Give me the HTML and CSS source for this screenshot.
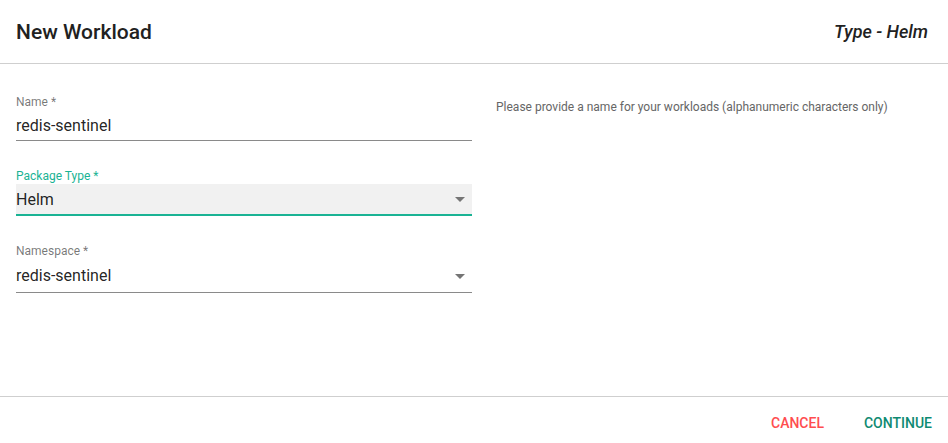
FILE: index.html
```html
<!DOCTYPE html>
<html lang="en">
<head>
    <meta charset="UTF-8">
    <meta name="viewport" content="width=device-width, initial-scale=1.0">
    <title>New Workload</title>
    <link rel="stylesheet" href="styles.css">
</head>
<body>
    <div class="dialog">
        <div class="dialog-header">
            <h2>New Workload</h2>
            <span class="type-tag">Type - Helm</span>
        </div>

        <div class="dialog-body">
            <div class="form-col">
                <div class="field">
                    <label for="name">Name *</label>
                    <div class="input-box">
                        <input type="text" id="name" value="redis-sentinel">
                    </div>
                </div>
                <div class="field focused">
                    <label>Package Type *</label>
                    <div class="input-box select filled">
                        <span class="value">Helm</span>
                        <svg class="arrow" viewBox="0 0 24 24" width="24" height="24"><path d="M7 10l5 5 5-5z"/></svg>
                    </div>
                </div>
                <div class="field">
                    <label>Namespace *</label>
                    <div class="input-box select">
                        <span class="value">redis-sentinel</span>
                        <svg class="arrow" viewBox="0 0 24 24" width="24" height="24"><path d="M7 10l5 5 5-5z"/></svg>
                    </div>
                </div>
            </div>
            <div class="help-col">
                <p>Please provide a name for your workloads (alphanumeric characters only)</p>
            </div>
        </div>

        <div class="dialog-footer">
            <button class="btn cancel">Cancel</button>
            <button class="btn continue">Continue</button>
        </div>
    </div>
</body>
</html>
```

FILE: styles.css
```css
html, body {
    overflow: hidden;
}
body {
    font-family: Roboto, "Liberation Sans", sans-serif;
    margin: 0;
    background-color: #fff;
    color: rgba(0, 0, 0, 0.87);
}
.dialog {
    width: 100%;
}
.dialog-header {
    display: flex;
    justify-content: space-between;
    align-items: center;
    height: 63px;
    padding: 0 20px 0 16px;
    border-bottom: 1px solid #cfcfcf;
}
.dialog-header h2 {
    margin: 0;
    font-size: 21px;
    font-weight: 500;
    color: #212121;
}
.type-tag {
    font-size: 18px;
    font-weight: 500;
    font-style: italic;
    color: #212121;
}
.dialog-body {
    display: flex;
    gap: 24px;
    height: 332px;
    box-sizing: border-box;
    padding: 30px 16px 0 16px;
}
.form-col {
    width: 456px;
    display: flex;
    flex-direction: column;
    gap: 27px;
}
.field label {
    display: block;
    font-size: 12px;
    line-height: 16px;
    color: rgba(0, 0, 0, 0.54);
}
.field.focused label {
    color: #1ab394;
}
.input-box {
    position: relative;
    display: flex;
    align-items: center;
    height: 30px;
    border-bottom: 1px solid #8a8a8a;
    font-size: 16px;
}
.input-box input {
    border: none;
    outline: none;
    padding: 0;
    width: 100%;
    font: inherit;
    color: rgba(0, 0, 0, 0.87);
    background: transparent;
}
.input-box.select {
    height: 33px;
}
.input-box.filled {
    height: 30px;
    background-color: #f1f1f1;
    border-bottom: 2px solid #1ab394;
}
.arrow {
    position: absolute;
    right: 0;
    top: 50%;
    margin-top: -12px;
    fill: #757575;
}
.help-col p {
    margin: 5px 0 0 0;
    font-size: 12px;
    line-height: 16px;
    color: #666;
}
.dialog-footer {
    display: flex;
    justify-content: flex-end;
    align-items: flex-start;
    height: 46px;
    box-sizing: border-box;
    padding: 8px 8px 0 8px;
    border-top: 1px solid #cfcfcf;
    gap: 24px;
}
.btn {
    height: 36px;
    padding: 0 8px;
    border: none;
    background: none;
    font-family: inherit;
    font-size: 14px;
    font-weight: 500;
    text-transform: uppercase;
    cursor: pointer;
}
.btn.cancel {
    color: #ff4d4f;
}
.btn.continue {
    color: #0f8a72;
}
```
